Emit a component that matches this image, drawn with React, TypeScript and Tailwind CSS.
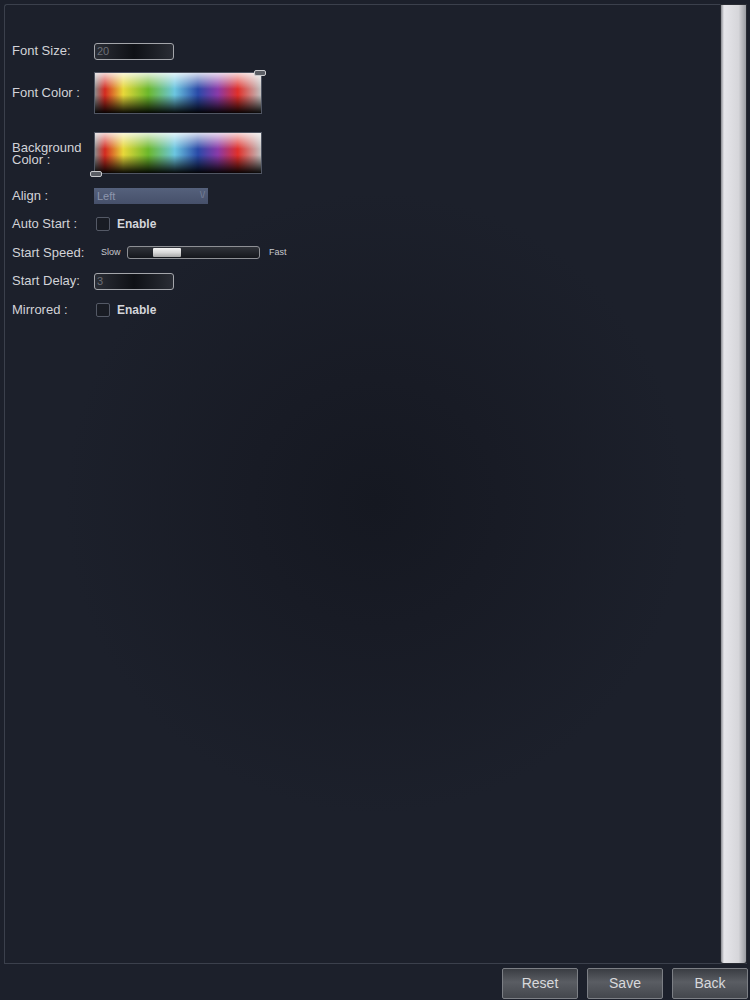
import React from "react";

const spectrum =
  "bg-[linear-gradient(to_bottom,rgba(255,255,255,0.8)_0%,rgba(255,255,255,0)_40%,rgba(0,0,0,0)_55%,rgba(0,0,0,0.95)_100%),linear-gradient(to_right,#8a8a8a_0%,#d42a20_6%,#e8d83a_17%,#6cb82c_32%,#6cc6e0_48%,#2a4aa8_62%,#8a3aa8_74%,#e0302a_86%,#c0c0c0_100%)]";

function Label({ children, className = "" }: { children: React.ReactNode; className?: string }) {
  return <div className={`w-[82px] shrink-0 text-[13px] text-[#d2d3d8] ${className}`}>{children}</div>;
}

function TextBox({ value }: { value: string }) {
  return (
    <div className="w-[80px] h-[17px] rounded-[3px] border border-[#a4a6ab] bg-[linear-gradient(to_right,#2a2d35,#0f1116_50%,#2a2d35)] flex items-center px-[2px] text-[11px] text-[#6c6f77]">
      {value}
    </div>
  );
}

function Check() {
  return (
    <div className="flex items-center gap-[7px] pl-[2px]">
      <div className="w-[14px] h-[14px] rounded-[2px] border border-[#545966] bg-[#191c24]" />
      <span className="text-[12px] font-bold text-[#d4d5da]">Enable</span>
    </div>
  );
}

function Swatch({ handle }: { handle: "tr" | "bl" }) {
  return (
    <div className={`relative w-[168px] h-[42px] border border-[#505562] ${spectrum}`}>
      <div
        className={`absolute w-[12px] h-[6px] rounded-[2px] border border-[#c8c9cc] bg-[#5a5d64] ${
          handle === "tr" ? "-top-[3px] -right-[5px]" : "-bottom-[4px] -left-[5px]"
        }`}
      />
    </div>
  );
}

export default function App() {
  return (
    <div className="w-[750px] h-[1000px] bg-[#1c202b] flex flex-col" style={{ fontFamily: '"Liberation Sans", Arial, sans-serif' }}>
      <div className="mt-[4px] ml-[4px] mr-[3px] h-[960px] flex rounded-tl-[3px] border-l border-t border-b border-[#3b404c] bg-[radial-gradient(circle_at_50%_52%,#151821_0%,#181b25_20%,#1c202b_50%)]">
        <div className="flex-1 flex flex-col pl-[7px] pt-[36px]">
          <div className="flex items-center h-[20px]">
            <Label>Font Size:</Label>
            <TextBox value="20" />
          </div>
          <div className="flex items-center mt-[11px]">
            <Label>Font Color :</Label>
            <Swatch handle="tr" />
          </div>
          <div className="flex items-center mt-[18px]">
            <Label className="flex flex-col gap-[1px] text-[11px]">
              <span className="leading-[11px]">Background</span>
              <span className="leading-[11px]">Color :</span>
            </Label>
            <Swatch handle="bl" />
          </div>
          <div className="flex items-center h-[28px] mt-[8px]">
            <Label>Align :</Label>
            <div className="w-[114px] h-[16px] bg-[linear-gradient(to_bottom,#55617c,#46506a)] flex items-center justify-between px-[3px] text-[11px] text-[#8d96ad]">
              <span>Left</span>
              <span className="text-[9px] text-[#7a849c]">\/</span>
            </div>
          </div>
          <div className="flex items-center h-[28px]">
            <Label>Auto Start :</Label>
            <Check />
          </div>
          <div className="flex items-center h-[29px]">
            <Label>Start Speed:</Label>
            <span className="ml-[7px] w-[26px] text-[9px] text-[#c8c9ce]">Slow</span>
            <div className="relative w-[133px] h-[13px] rounded-[3px] border border-[#8e9095] bg-[linear-gradient(to_bottom,#30333a,#15171c)]">
              <div className="absolute top-[1px] left-[25px] w-[28px] h-[9px] rounded-[1px] bg-[linear-gradient(to_bottom,#f4f4f4,#d8d8d8_50%,#a8a8a8)]" />
            </div>
            <span className="ml-[9px] text-[9px] text-[#c8c9ce]">Fast</span>
          </div>
          <div className="flex items-center h-[28px]">
            <Label>Start Delay:</Label>
            <TextBox value="3" />
          </div>
          <div className="flex items-center h-[29px]">
            <Label>Mirrored :</Label>
            <Check />
          </div>
        </div>
        <div className="w-[27px] -mt-px -mb-px border border-[#2a2d34] rounded-b-[3px] bg-[linear-gradient(to_right,#8a8c92_0px,#e6e6ea_3px,#d6d6da_70%,#9a9ca2_100%)]" />
      </div>
      <div className="flex justify-end gap-[9px] pt-[4px] pr-[2px]">
        {["Reset", "Save", "Back"].map((t) => (
          <button
            key={t}
            className="w-[76px] h-[31px] rounded-[2px] border border-[#7c7f85] bg-[linear-gradient(to_bottom,#3a3d43,#5a5d63_45%,#44474d)] text-[14px] text-[#d8d9dc]"
          >
            {t}
          </button>
        ))}
      </div>
    </div>
  );
}
